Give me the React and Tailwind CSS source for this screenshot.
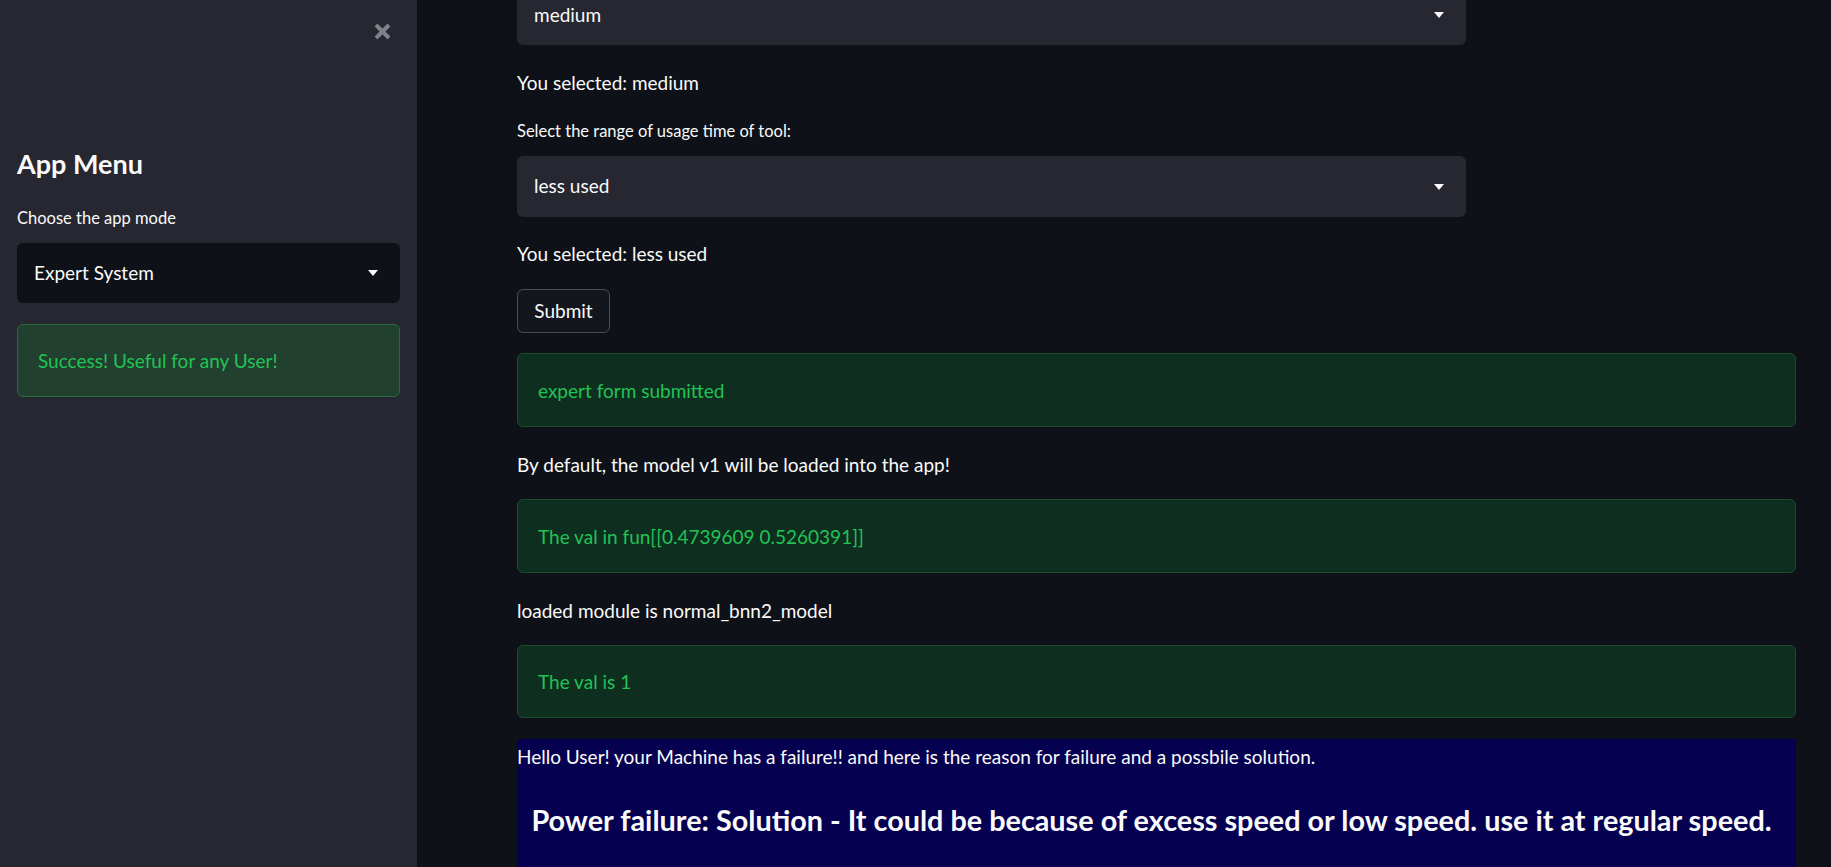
import React from "react";

const FONT = { fontFamily: '"Source Sans Pro", Lato, "Noto Sans", sans-serif' };

function Caret() {
  return (
    <svg width="10" height="6" viewBox="0 0 10 6" className="shrink-0">
      <path d="M0 0 H10 L5 6 Z" fill="#fafafa" />
    </svg>
  );
}

function Select({ value, bg, className }) {
  return (
    <div className={`flex items-center justify-between rounded-md pl-[17px] pr-[22px] ${bg} ${className}`}>
      <span className="text-[19px] text-[#fafafa]">{value}</span>
      <Caret />
    </div>
  );
}

function Alert({ children, className }) {
  return (
    <div className={`flex items-center rounded-md border border-[#1a4d2c] bg-[#0e2e20] pl-[20px] pt-[2px] text-[19px] text-[#21c354] ${className}`}>
      {children}
    </div>
  );
}

export default function App() {
  return (
    <div className="flex h-[867px] w-full overflow-hidden bg-[#0e1117]" style={FONT}>
      <aside className="flex w-[417px] shrink-0 flex-col bg-[#262730] px-[17px]">
        <div className="flex justify-end pr-[8px] pt-[22px]">
          <svg width="19" height="19" viewBox="0 0 19 19">
            <path d="M3 3 L16 16 M16 3 L3 16" stroke="#808189" strokeWidth="4" strokeLinecap="butt" />
          </svg>
        </div>
        <h2 className="mt-[103px] text-[27px] font-bold leading-[40px] text-[#fafafa]">App Menu</h2>
        <div className="mt-[24px] text-[16.5px] leading-[21px] text-[#fafafa]">Choose the app mode</div>
        <Select value="Expert System" bg="bg-[#0e1117]" className="mt-[14px] h-[60px]" />
        <div className="mt-[21px] flex h-[73px] items-center rounded-md border border-[#2a6a3d] bg-[#21402f] pl-[20px] pt-[2px] text-[19px] text-[#21c354]">
          Success! Useful for any User!
        </div>
      </aside>
      <main className="flex flex-1 flex-col pl-[100px] pr-[35px]">
        <Select value="medium" bg="bg-[#262730]" className="-mt-[15px] h-[60px] w-[949px] shrink-0" />
        <div className="mt-[24px] text-[19px] leading-[27px] text-[#fafafa]">You selected: medium</div>
        <div className="mt-[25px] text-[16.5px] leading-[21px] text-[#fafafa]">Select the range of usage time of tool:</div>
        <Select value="less used" bg="bg-[#262730]" className="mt-[14px] h-[61px] w-[949px] shrink-0" />
        <div className="mt-[23px] text-[19px] leading-[27px] text-[#fafafa]">You selected: less used</div>
        <div className="mt-[22px]">
          <button className="flex h-[44px] w-[93px] items-center justify-center rounded-md border border-[#4a4c55] bg-[#13161d] text-[19px] text-[#fafafa]">
            Submit
          </button>
        </div>
        <Alert className="mt-[20px] h-[74px] shrink-0">expert form submitted</Alert>
        <div className="mt-[24px] text-[19px] leading-[27px] text-[#fafafa]">By default, the model v1 will be loaded into the app!</div>
        <Alert className="mt-[21px] h-[74px] shrink-0">The val in fun[[0.4739609 0.5260391]]</Alert>
        <div className="mt-[24px] text-[19px] leading-[27px] text-[#fafafa]">loaded module is normal_bnn2_model</div>
        <Alert className="mt-[21px] h-[73px] shrink-0">The val is 1</Alert>
        <div className="mt-[21px] shrink-0 bg-[#060050] pb-[30px]">
          <p className="pt-[4px] text-[19px] leading-[27px] text-[#fafafa]">
            Hello User! your Machine has a failure!! and here is the reason for failure and a possbile solution.
          </p>
          <h2 className="mt-[32px] pr-[10px] text-center text-[28.8px] font-bold leading-[36px] text-[#fafafa]">
            Power failure: Solution - It could be because of excess speed or low speed. use it at regular speed.
          </h2>
        </div>
      </main>
    </div>
  );
}
